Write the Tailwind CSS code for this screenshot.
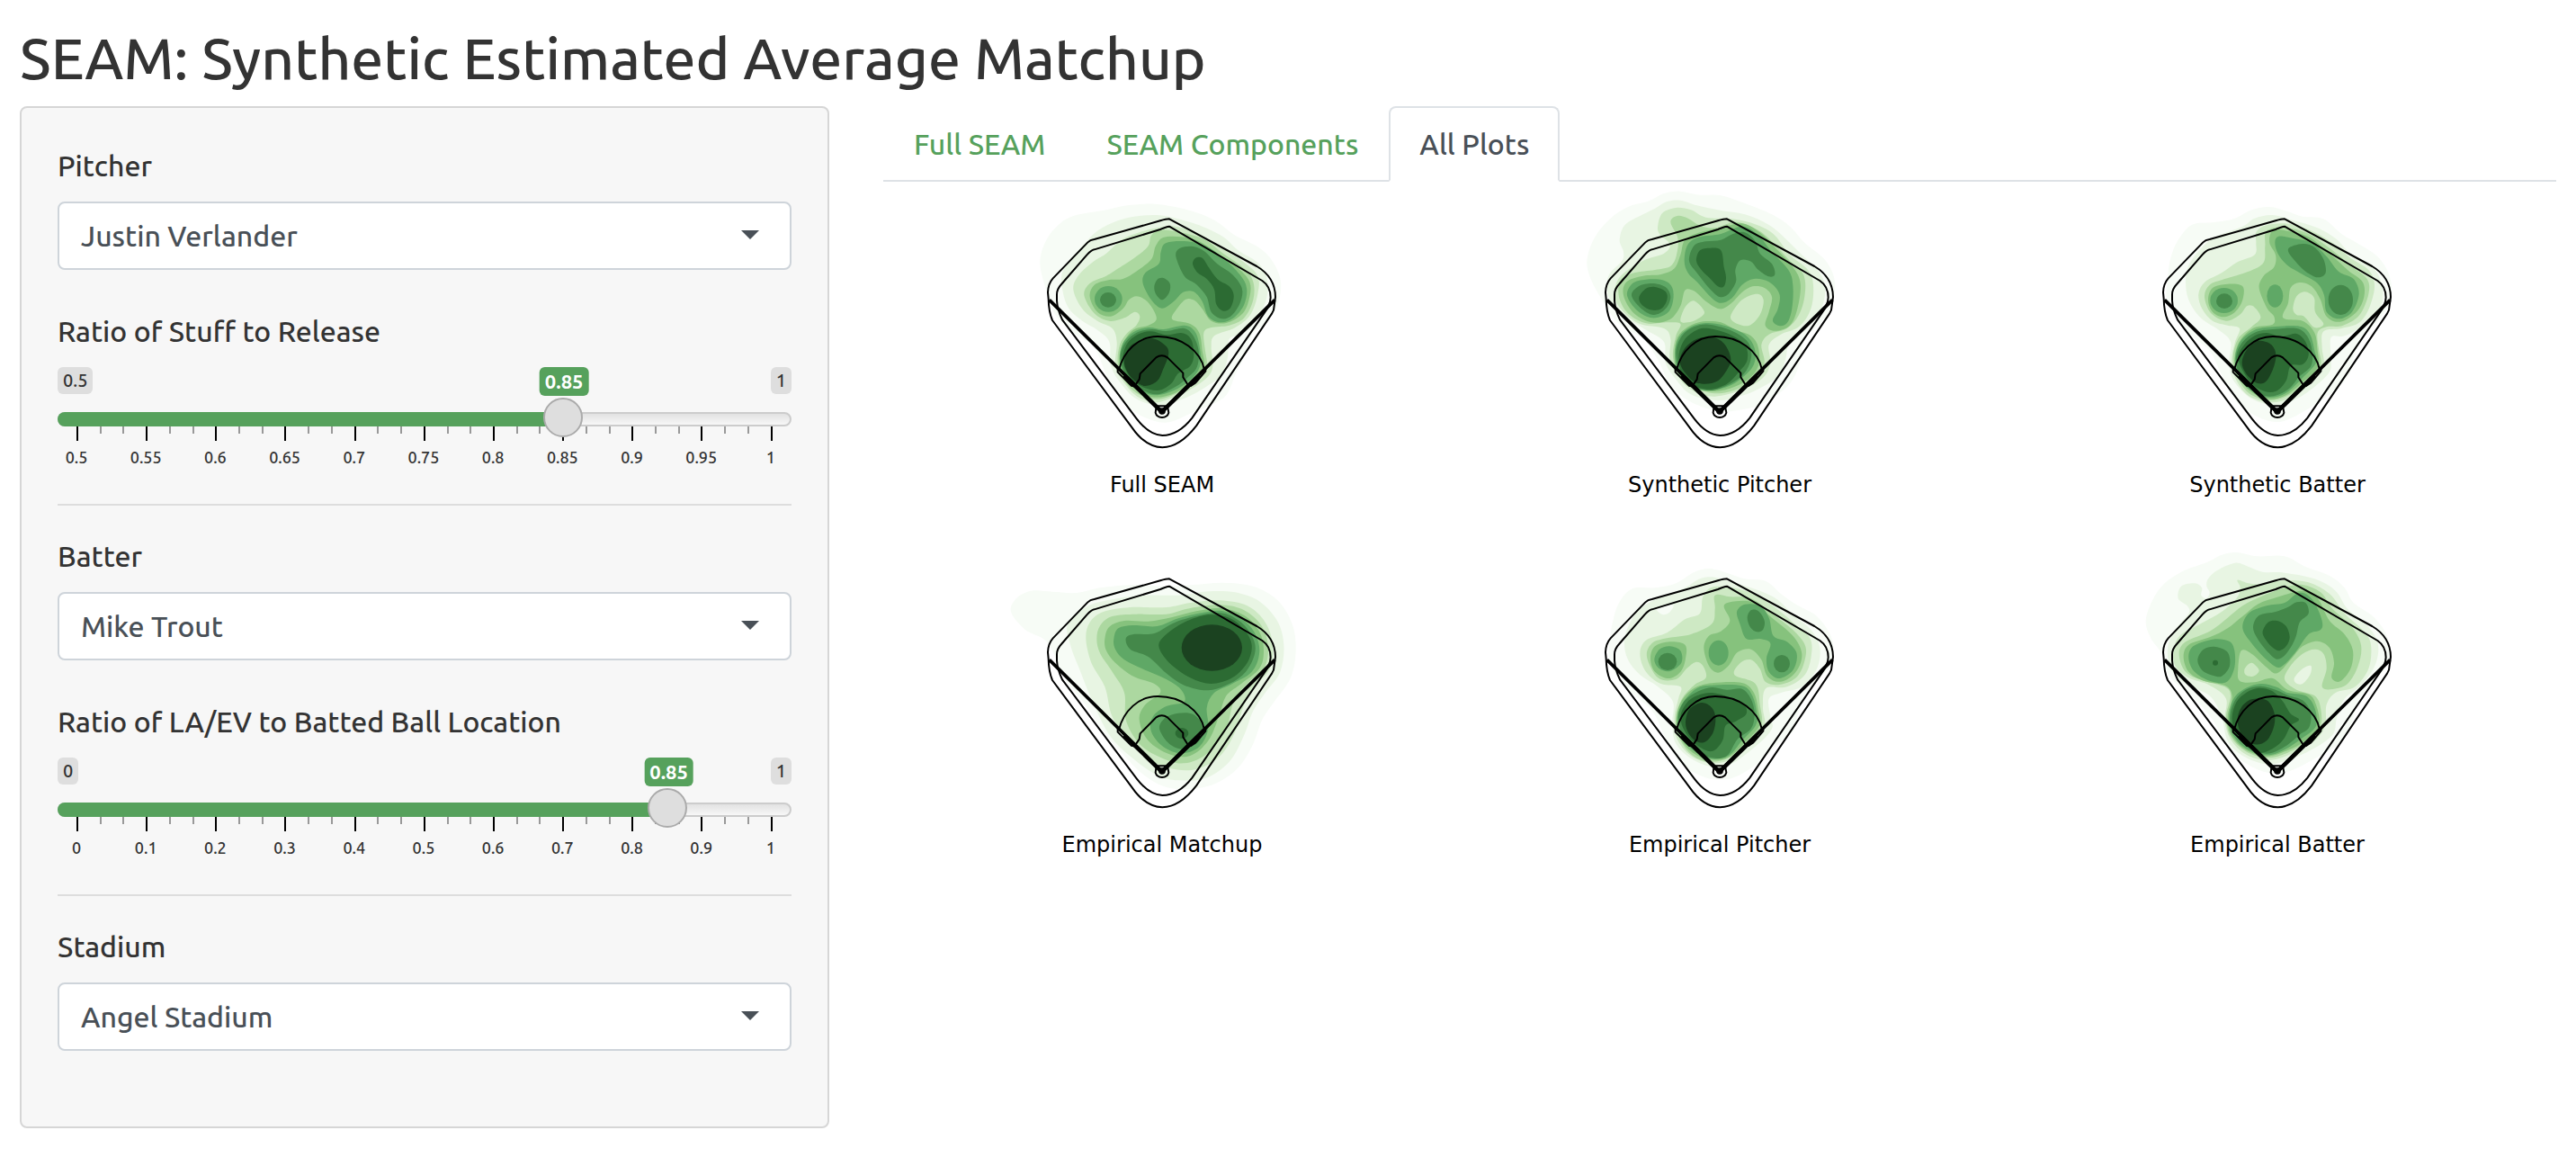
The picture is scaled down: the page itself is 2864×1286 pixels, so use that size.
<!DOCTYPE html>
<html lang="en">
<head>
    <meta charset="UTF-8">
    <meta name="viewport" content="width=device-width, initial-scale=1.0">
    <title>SEAM: Synthetic Estimated Average Matchup</title>
    <script src="https://cdn.jsdelivr.net/npm/@tailwindcss/browser@4"></script>
</head>
<body class="bg-white px-[22px] pt-6 pb-8 font-['Ubuntu','Noto_Sans',sans-serif] text-[32px] leading-[48px] font-medium text-[#333]">
    <h1 class="mb-[14px] text-[64px] leading-[80px] font-medium">SEAM: Synthetic Estimated Average Matchup</h1>
    <div class="grid grid-cols-[15fr_31fr] items-start gap-[60px]">
        <form class="rounded-lg border-2 border-[#d6d6d6] bg-[#f7f7f7] px-10 pt-10 pb-[84px]">
            <label for="pitcher" class="block">Pitcher</label>
            <div class="relative mt-4">
                <select id="pitcher" class="block h-[76px] w-full appearance-none rounded-lg border-2 border-[#ced4da] bg-white px-6 text-[#495057]">
                    <option>Justin Verlander</option>
                </select>
                <svg class="pointer-events-none absolute top-8 right-9 h-[10px] w-5 fill-[#495057]" viewBox="0 0 20 10"><path d="M0 0H20L10 10Z"/></svg>
            </div>
            <label for="stuff" class="mt-11 block">Ratio of Stuff to Release</label>
            <div class="slider mt-4" data-id="stuff" data-min="0.5" data-max="1" data-step="0.05" data-value="0.85"></div>
            <hr class="my-10 mb-8 border-t-2 border-[#dddddd]">

            <label for="batter" class="block">Batter</label>
            <div class="relative mt-4">
                <select id="batter" class="block h-[76px] w-full appearance-none rounded-lg border-2 border-[#ced4da] bg-white px-6 text-[#495057]">
                    <option>Mike Trout</option>
                </select>
                <svg class="pointer-events-none absolute top-8 right-9 h-[10px] w-5 fill-[#495057]" viewBox="0 0 20 10"><path d="M0 0H20L10 10Z"/></svg>
            </div>
            <label for="laev" class="mt-11 block">Ratio of LA/EV to Batted Ball Location</label>
            <div class="slider mt-4" data-id="laev" data-min="0" data-max="1" data-step="0.1" data-value="0.85"></div>
            <hr class="my-10 mb-8 border-t-2 border-[#dddddd]">

            <label for="stadium" class="block">Stadium</label>
            <div class="relative mt-4">
                <select id="stadium" class="block h-[76px] w-full appearance-none rounded-lg border-2 border-[#ced4da] bg-white px-6 text-[#495057]">
                    <option>Angel Stadium</option>
                </select>
                <svg class="pointer-events-none absolute top-8 right-9 h-[10px] w-5 fill-[#495057]" viewBox="0 0 20 10"><path d="M0 0H20L10 10Z"/></svg>
            </div>
        </form>

        <main>
            <nav class="flex border-b-2 border-[#dee2e6] text-[#56a15c]">
                <a href="#full" class="-mb-[2px] border-2 border-transparent px-8 py-4">Full SEAM</a>
                <a href="#components" class="-mb-[2px] border-2 border-transparent px-8 py-4">SEAM Components</a>
                <a href="#all" class="-mb-[2px] rounded-t-lg border-2 border-[#dee2e6] border-b-white bg-white px-8 py-4 text-[#495057]">All Plots</a>
            </nav>
            <div id="plots" class="grid grid-cols-3"></div>
        </main>
    </div>

    <!-- Field outline shared by every plot -->
    <svg class="hidden">
        <symbol id="field" viewBox="0 0 1020 900" overflow="visible">
            <g fill="none" stroke="#000" stroke-width="6" stroke-linejoin="round">
                <path d="M540 100L832 258Q893 294 894 360L888 404L882 416L630 790Q576 860 517 862Q460 860 416 796L150 438Q138 410 137 366L135 345Q136 316 152 298L268 178Q276 170 290 168L510 106Q530 100 540 100Z"/>
                <path d="M540 125L850 306Q878 325 878 362L876 376L866 400L616 764Q570 822 517 822Q472 820 431 766L183 436Q166 400 165 372V352Q165 334 180 318L265 220Q280 204 290 202L510 135Q530 126 540 125Z"/>
                <path d="M372 603C388 540 438 492 500 492C580 491 645 540 657 603M368 598V611L413 656L430 659M661 598V608L628 646L612 657H598"/>
                <path d="M426 655L440 635L443 616L496 562Q515 550 534 562L586 614V628L603 655"/>
                <path d="M140 370L515 742L892 370" stroke-width="11"/>
                <path d="M390 622L515 744L640 622" stroke-width="13"/>
                <path d="M497 724H534L538 746Q534 761 516 762Q498 761 494 746Z"/>
                <circle cx="516" cy="741" r="9" stroke-width="5"/>
            </g>
        </symbol>
    </svg>

    <script>
        // Density bands, lightest to darkest
        var colors = ['#f7fcf6', '#e8f5e3', '#cee9c4', '#acd8a0', '#86c27d', '#5fa866', '#44884a', '#2c6b33', '#1b4220'];

        // Each contour is [band, points], a contour with four numbers is an ellipse (cx cy rx ry)
        var plots = [
            { name: 'Full SEAM', dx: 0, dy: 0, contours: [
                [0, '109,250 125,180 165,125 220,90 330,70 400,55 490,50 560,60 640,82 700,110 760,155 830,190 880,235 912,310 900,390 860,450 820,480 790,560 760,620 735,680 700,710 620,745 540,778 480,770 420,740 370,690 330,620 290,530 220,480 160,420 130,340'],
                [1, '180,300 200,250 250,190 300,140 370,105 440,90 510,88 570,100 650,125 720,160 770,205 840,250 868,310 860,380 820,450 780,485 740,500 735,560 715,620 670,655 620,685 560,710 500,722 430,700 380,650 345,590 340,510 300,470 250,440 200,390'],
                [2, '220,335 240,285 290,240 330,215 380,170 440,145 500,130 560,125 640,150 720,200 790,245 835,290 835,350 810,420 760,462 690,490 680,530 685,590 665,630 600,675 540,700 490,712 430,690 385,640 360,590 365,510 350,465 300,440 250,400'],
                [3, '256,355 275,315 330,290 370,265 430,225 470,190 480,155 510,137 580,145 660,170 720,215 790,265 820,310 820,370 790,430 740,455 680,462 655,480 660,540 665,590 640,635 580,675 500,702 430,680 385,630 368,580 375,520 400,480 430,455 442,425 425,410 390,430 340,440 290,415'],
                [4, '275,360 290,320 340,303 385,300 430,275 480,235 495,190 520,162 580,160 640,175 700,215 770,265 808,310 808,360 785,415 730,447 680,440 650,400 625,372 595,368 565,400 550,435 610,450 640,480 650,540 655,590 620,640 560,680 490,695 430,670 385,620 373,570 385,515 420,470 470,455 497,435 485,400 460,370 430,358 405,370 385,400 345,425 300,410'],
                [5, '375,570 385,515 420,478 470,462 520,468 590,455 625,475 640,520 645,580 620,628 560,670 490,688 430,665 390,620'],
                [5, '337 367 46 43'],
                [5, '512,210 530,180 600,175 660,190 720,230 775,285 798,330 790,385 755,430 710,445 670,425 650,375 620,342 585,345 555,375 515,398 480,370 452,315 460,280 505,250'],
                [6, '377,560 395,510 430,480 480,468 530,474 590,465 620,490 638,540 632,595 600,630 560,660 500,685 440,665 395,620'],
                [6, '336 370 27 25'],
                [6, '490,325 500,302 520,297 542,315 540,345 517,370 495,350'],
                [6, '562,225 575,198 620,192 660,210 700,250 750,285 782,330 778,375 750,420 715,433 680,410 665,360 630,318 590,290'],
                [7, '385,565 400,515 435,485 480,475 530,487 580,480 612,500 622,550 610,590 570,615 545,650 500,672 440,655 400,615'],
                [7, '618,250 628,230 650,230 672,262 700,300 740,325 755,355 745,395 720,407 697,385 690,335 665,300 635,280'],
                [8, '390,575 405,530 440,507 490,500 530,525 537,555 520,600 500,640 460,657 425,640 400,610']
            ] },
            { name: 'Synthetic Pitcher', dx: 0, dy: -30, contours: [
                [0, '73,270 100,190 150,130 210,90 280,70 330,45 385,38 450,50 520,52 600,78 690,115 750,155 800,210 870,270 900,340 890,420 850,480 800,530 780,620 740,690 650,750 560,770 500,770 410,735 350,680 310,600 260,530 180,480 130,410 90,340'],
                [1, '182,200 200,150 260,115 300,95 340,72 385,68 440,85 520,102 600,115 680,150 740,200 790,250 850,310 868,370 850,440 800,500 750,530 735,600 710,655 640,700 570,725 500,735 420,715 370,665 335,610 330,540 270,500 190,450 145,390 145,320 190,270 195,240'],
                [2, '310,150 325,110 370,93 420,100 470,125 560,130 640,150 700,185 750,250 810,300 828,350 820,430 780,490 720,515 680,550 685,610 660,660 590,700 500,722 430,705 380,660 350,600 352,530 330,495 250,480 195,440 165,390 175,335 210,300 270,265 330,245 350,215 315,180'],
                [3, '352,140 375,120 410,128 450,152 500,160 570,140 640,165 690,205 750,270 795,315 800,380 780,450 740,495 680,515 655,550 665,610 640,655 580,695 500,712 430,690 380,650 360,590 370,520 385,480 340,475 270,478 210,445 180,390 185,335 230,310 300,300 355,285 375,235 375,190'],
                [2, '385,470 400,425 430,403 465,440 440,465 410,475'],
                [2, '552,455 590,400 640,380 662,400 650,450 615,485 575,480'],
                [4, '195,385 205,340 260,320 320,315 365,295 385,250 400,200 450,175 520,160 590,145 650,175 700,225 760,290 785,345 775,430 750,485 700,503 668,485 680,440 690,390 665,360 625,355 590,375 550,415 515,430 470,405 430,370 400,368 385,420 350,465 290,475 230,445'],
                [4, '365,580 375,525 410,490 460,472 520,475 570,500 620,520 645,560 645,620 610,665 550,695 480,705 420,690 375,640'],
                [5, '207,385 225,345 270,332 330,335 358,360 360,405 340,445 290,460 240,435'],
                [5, '398,270 410,215 450,190 520,180 590,155 640,180 690,240 745,300 760,350 758,420 745,470 720,487 693,470 710,430 715,380 680,340 630,330 590,350 555,395 515,410 480,385 440,340 410,310'],
                [5, '367,580 380,525 420,490 470,477 530,485 600,515 632,560 630,615 590,660 540,690 470,702 415,685 378,640'],
                [6, '222,385 245,355 290,345 335,357 352,390 335,430 295,450 250,425'],
                [6, '414,270 430,220 470,205 520,200 560,180 600,175 635,205 650,245 690,280 700,315 680,322 645,300 620,272 585,268 568,300 570,340 545,380 515,390 480,360 440,310'],
                [6, '370,575 390,520 430,490 480,482 550,500 605,535 622,580 605,635 560,675 490,702 420,685 385,640'],
                [7, '247,390 270,362 300,357 335,372 340,400 320,430 285,433 255,415'],
                [7, '438,270 450,235 485,227 520,235 530,290 537,325 530,355 510,355 480,325 455,300'],
                [7, '380,580 400,530 440,500 480,495 550,515 600,550 608,600 580,640 540,680 480,698 420,680 385,635'],
                [8, '383,610 400,560 440,530 490,523 530,545 552,590 545,625 510,670 460,680 420,665']
            ] },
            { name: 'Synthetic Batter', dx: 0, dy: 0, contours: [
                [0, '160,230 185,170 230,120 300,112 370,100 430,70 490,60 550,75 600,92 670,100 730,150 790,185 850,225 890,290 895,370 860,430 800,500 770,560 755,620 710,670 640,720 560,765 510,777 450,760 380,710 330,620 290,540 210,470 150,380 150,300'],
                [1, '210,310 220,255 260,200 310,160 400,125 440,98 500,87 570,105 650,130 710,165 760,215 830,255 865,320 860,390 800,455 740,490 695,495 695,570 690,610 640,660 570,705 500,720 430,700 370,640 355,580 360,510 320,470 260,430 220,370'],
                [2, '253,350 275,310 330,280 380,245 440,220 445,180 445,145 475,122 540,115 620,135 700,180 760,230 820,270 840,320 825,390 790,445 730,465 670,475 665,530 670,590 630,645 570,690 500,712 420,690 375,630 363,570 375,510 390,465 350,455 300,440 265,400'],
                [3, '273,360 290,320 340,300 420,275 470,245 475,190 480,140 540,128 620,150 700,205 760,255 815,300 820,350 790,420 735,455 680,460 650,480 655,540 660,590 620,640 560,685 490,705 420,680 380,620 368,560 385,500 430,460 460,430 440,395 415,390 390,420 345,440 295,415'],
                [2, '568,400 580,358 608,343 638,362 642,410 670,450 640,462 605,425 580,420'],
                [4, '285,370 300,330 350,317 400,325 400,370 375,410 335,427 298,408'],
                [4, '455,330 470,290 505,260 510,220 490,180 500,140 550,140 620,160 690,215 750,270 800,310 805,360 780,410 725,443 680,425 660,370 630,325 590,312 560,330 552,380 535,430 600,440 640,480 650,540 650,595 600,645 540,690 480,700 420,670 378,610 375,550 395,500 440,462 500,452 505,425 480,395'],
                [5, '338 372 46 42'],
                [5, '508 357 27 38'],
                [5, '508,180 520,158 570,165 630,180 680,225 720,275 770,300 788,350 765,410 720,433 680,410 672,355 650,315 600,285 550,255 520,220'],
                [5, '375,560 395,505 440,470 500,460 590,458 625,485 640,540 645,580 600,630 545,680 485,695 425,670 385,620'],
                [6, '339 374 27 25'],
                [6, '552,200 600,183 640,195 670,235 677,280 650,295 610,275 575,240'],
                [6, '727 370 41 50'],
                [6, '378,560 400,510 445,477 500,468 580,465 615,490 632,540 628,590 590,625 550,670 490,692 430,668 390,620'],
                [7, '385,565 405,520 440,490 480,480 530,492 580,483 610,510 620,555 600,585 560,590 545,640 510,675 460,670 415,630'],
                [8, '398,580 415,535 450,507 490,515 510,545 505,590 480,640 450,648 415,620']
            ] },
            { name: 'Empirical Matchup', dx: -30, dy: 0, contours: [
                [0, '42,210 60,165 110,140 180,143 260,147 340,130 450,120 560,125 650,120 750,113 850,125 930,170 980,250 992,340 975,430 920,510 880,570 850,650 800,730 730,780 650,800 560,795 480,750 420,690 350,610 290,520 220,430 180,340 150,300 90,270'],
                [1, '232,250 300,190 400,165 490,155 600,155 700,142 790,145 870,175 930,240 952,320 940,410 890,480 850,540 820,620 770,710 690,765 600,772 530,755 450,700 370,620 310,500 270,400 240,320'],
                [2, '292,300 305,245 350,210 440,195 560,195 640,180 740,172 830,190 890,245 915,320 905,400 860,455 820,520 790,610 740,690 660,735 570,732 500,700 440,640 380,560 355,460 310,380'],
                [3, '328,300 340,255 380,225 460,218 560,218 640,198 740,187 820,205 880,260 900,330 885,400 830,450 785,510 760,600 700,680 620,715 540,695 470,650 425,570 420,480 380,410 340,350'],
                [4, '355,300 370,260 420,240 500,242 580,228 660,208 740,198 820,222 870,275 885,340 870,400 810,450 760,490 735,560 700,640 640,690 570,685 500,640 470,570 490,520 540,480 520,450 450,425 390,380 360,340'],
                [5, '385,300 400,265 450,255 530,258 600,232 680,213 750,208 820,240 860,290 870,350 845,410 780,450 720,480 695,530 700,600 670,660 610,682 550,660 510,610 515,560 560,525 620,510 610,470 560,435 480,400 420,370 390,335'],
                [6, '425,300 450,285 520,282 590,245 680,220 750,215 810,245 850,300 855,350 825,410 770,450 700,472 620,455 560,415 500,360 440,335'],
                [6, '537,600 555,565 600,548 650,552 680,590 670,640 620,668 570,650'],
                [7, '535,325 560,285 620,245 700,220 770,230 820,270 845,320 830,380 780,430 710,450 640,430 570,380'],
                [7, '612 615 22 18'],
                [8, '712 330 101 77']
            ] },
            { name: 'Empirical Pitcher', dx: 0, dy: 0, contours: [
                [0, '160,240 180,180 225,133 300,130 370,115 430,78 480,66 540,80 600,100 670,108 720,150 770,185 840,225 890,300 890,380 850,430 800,490 775,560 760,610 710,650 650,710 570,760 510,770 450,755 380,710 330,620 290,540 200,460 150,380 150,300'],
                [1, '198,310 215,250 250,200 310,165 400,130 450,100 500,95 570,115 650,140 710,170 760,220 820,270 850,330 840,400 790,460 720,480 680,500 685,560 690,600 640,655 560,715 500,728 430,705 370,650 358,580 360,510 310,460 250,420 210,370'],
                [0, '305,200 335,188 362,188 348,212 325,219'],
                [2, '250,350 270,305 340,280 400,235 450,215 460,160 490,128 560,130 640,155 700,195 760,245 815,295 822,350 800,420 740,460 670,465 660,530 665,590 620,650 560,700 490,715 420,690 372,630 365,560 378,500 385,460 320,450 270,410'],
                [3, '273,360 290,315 340,298 420,285 490,250 500,200 500,155 550,160 620,165 690,215 760,270 800,320 800,370 775,425 720,452 670,445 650,400 620,370 585,380 565,420 635,450 650,520 655,590 610,645 550,695 480,710 420,685 376,620 370,560 390,500 430,455 470,430 460,390 435,378 405,400 370,435 310,430'],
                [4, '285,365 300,325 350,310 400,320 402,365 385,410 345,432 300,410'],
                [4, '463,330 480,290 520,275 550,240 530,190 570,175 630,180 690,230 760,290 790,350 770,410 720,443 675,425 655,370 620,335 575,345 545,390 510,413 480,390'],
                [4, '372,560 390,505 430,465 490,448 590,447 630,480 645,540 648,590 600,645 545,695 480,703 420,675 380,620'],
                [5, '298,370 315,335 350,325 385,340 388,380 350,408 315,400'],
                [5, '512 347 33 42'],
                [5, '573,210 600,185 650,190 680,230 695,290 740,310 773,350 760,405 715,432 680,410 672,365 685,315 650,300 605,300 585,255'],
                [5, '375,560 395,510 440,465 490,455 590,457 625,490 640,550 635,590 590,640 545,690 485,700 425,670 385,615'],
                [6, '342 376 31 29'],
                [6, '608,230 620,205 645,208 665,240 660,270 640,277 618,262'],
                [6, '723 383 27 29'],
                [6, '378,555 400,505 445,475 490,462 540,470 590,467 620,500 632,550 620,600 575,635 540,690 490,697 430,665 388,610'],
                [7, '385,560 405,515 440,490 490,480 550,495 595,515 605,550 570,575 535,590 525,640 490,675 440,655 400,610'],
                [8, '402,580 415,535 455,513 490,530 502,565 495,610 470,642 440,643 412,615']
            ] },
            { name: 'Empirical Batter', dx: 0, dy: 0, contours: [
                [0, '77,240 100,170 140,115 200,75 280,45 330,20 380,12 450,25 540,25 610,60 690,90 740,130 770,180 840,230 885,300 885,380 840,440 790,500 760,590 720,650 640,700 560,740 490,748 410,715 350,660 300,570 240,500 160,430 130,350 95,300'],
                [1, '150,330 175,270 220,215 215,190 185,165 195,125 240,115 264,130 262,155 280,165 290,145 280,125 285,100 315,72 375,47 420,60 470,78 540,80 640,100 710,140 750,200 810,250 850,310 845,380 800,450 740,500 715,560 700,620 630,670 550,705 480,718 400,690 350,640 330,560 290,490 210,450 160,400'],
                [2, '170,340 190,290 260,250 330,210 380,165 392,130 383,104 420,115 460,118 540,105 620,112 690,150 740,215 800,270 828,320 820,400 775,460 710,480 680,520 675,590 640,640 560,685 480,705 410,685 360,635 340,570 345,500 290,455 220,430 175,390'],
                [1, '573,430 600,400 628,390 625,420 600,450 578,448'],
                [3, '188,350 210,310 290,275 350,230 400,190 460,160 540,130 600,120 660,145 700,200 760,255 795,320 785,390 750,450 700,468 665,460 680,400 670,350 640,335 600,350 560,390 540,435 580,470 640,490 660,530 660,590 620,640 550,680 480,697 410,675 360,625 345,560 360,490 340,460 270,440 210,410'],
                [2, '407,400 430,380 455,405 435,425 410,420'],
                [4, '203,360 220,320 290,295 350,265 400,225 450,185 520,160 600,140 650,165 690,240 740,285 768,340 760,400 725,442 697,430 705,380 690,330 650,308 600,325 560,370 515,415 480,395 430,350 395,340 385,400 390,440 440,445 500,432 550,470 620,485 645,520 655,590 610,640 550,672 480,692 410,670 362,620 350,560 365,490 340,455 270,440 220,410'],
                [5, '220,365 235,325 300,302 355,308 373,340 372,400 345,445 290,440 240,410'],
                [5, '400,265 420,215 480,190 540,180 580,150 610,150 640,180 665,240 660,270 620,285 580,340 540,385 515,395 480,370 430,315'],
                [5, '355,560 370,500 410,465 460,450 510,460 550,480 610,490 640,530 645,590 600,630 540,670 480,688 410,665 365,615'],
                [6, '250,370 270,335 310,327 350,345 357,390 330,425 300,422 265,405'],
                [6, '435,260 455,222 510,210 550,195 580,178 610,180 620,215 590,245 575,300 545,350 515,368 485,345 450,300'],
                [6, '358,560 375,505 410,470 460,458 510,470 550,488 600,505 627,545 622,595 590,620 540,660 480,683 415,660 370,610'],
                [7, '309 380 9 9'],
                [7, '467,275 485,245 515,240 545,258 557,295 545,325 520,340 495,325 475,300'],
                [7, '365,560 380,510 415,478 455,464 500,475 535,510 560,550 588,570 560,590 540,630 510,660 460,680 410,655 375,610'],
                [8, '383,575 395,530 430,502 480,505 505,545 505,590 480,640 440,652 400,625']
            ] }
        ];

        // Closed smooth curve through the points
        function smooth(str) {
            var p = str.split(' ').map(s => s.split(',').map(Number));
            var n = p.length;
            var d = 'M' + p[0];
            for (var i = 0; i < n; i++) {
                var a = p[(i + n - 1) % n], b = p[i], c = p[(i + 1) % n], e = p[(i + 2) % n];
                d += 'C' + [b[0] + (c[0] - a[0]) / 6, b[1] + (c[1] - a[1]) / 6, c[0] - (e[0] - b[0]) / 6, c[1] - (e[1] - b[1]) / 6, c[0], c[1]].map(Math.round).join(' ');
            }
            return d + 'Z';
        }

        function shape(contour) {
            var fill = colors[contour[0]];
            if (contour[1].indexOf(',') === -1) {
                var e = contour[1].split(' ');
                return `<ellipse cx="${e[0]}" cy="${e[1]}" rx="${e[2]}" ry="${e[3]}" fill="${fill}"/>`;
            }
            return `<path d="${smooth(contour[1])}" fill="${fill}"/>`;
        }

        document.getElementById('plots').innerHTML = plots.map(plot => `
            <figure class="flex h-[400px] flex-col items-center pt-2">
                <svg class="h-[300px] w-[340px] shrink-0 overflow-visible" viewBox="6 0 1020 900" role="img" aria-label="${plot.name}">
                    <g transform="translate(${plot.dx} ${plot.dy})">${plot.contours.map(shape).join('')}</g>
                    <use href="#field" width="1020" height="900"/>
                </svg>
                <figcaption class="mt-[11px] font-['DejaVu_Sans',sans-serif] text-[24px] leading-[36px] font-normal text-black">${plot.name}</figcaption>
            </figure>`).join('');

        document.querySelectorAll('.slider').forEach(el => {
            var min = +el.dataset.min, max = +el.dataset.max, step = +el.dataset.step, value = +el.dataset.value;
            var pct = (value - min) / (max - min) * 100;
            var count = Math.round((max - min) / step);
            var ticks = '', labels = '';
            for (var i = 0; i <= count * 3; i++) {
                ticks += i % 3 === 0 ? '<i class="h-4 w-[2px] bg-black"></i>' : '<i class="h-2 w-[2px] bg-[#999]"></i>';
            }
            for (var j = 0; j <= count; j++) {
                labels += `<span class="flex w-0 justify-center">${+(min + j * step).toFixed(2)}</span>`;
            }
            el.innerHTML = `
                <div class="relative flex h-[34px] items-start justify-between text-[20px] leading-[30px]">
                    <span class="rounded-md bg-[#dedede] px-[6px]">${min}</span>
                    <span class="rounded-md bg-[#dedede] px-[6px]">${max}</span>
                    <div class="absolute inset-x-5 top-0">
                        <output for="${el.dataset.id}" class="absolute -translate-x-1/2 rounded-md bg-[#56a15c] px-[6px] text-[22px] leading-[32px] font-bold text-white" style="left:${pct}%">${value}</output>
                    </div>
                </div>
                <div class="relative mt-4 h-4 rounded-lg border-2 border-[#ccc] bg-linear-to-b from-[#e2e2e2] to-[#f7f7f7]">
                    <div class="absolute -inset-[2px]"><div class="h-4 rounded-l-lg bg-[#56a15c]" style="width:${pct}%"></div></div>
                    <input type="range" id="${el.dataset.id}" min="${min}" max="${max}" step="0.01" value="${value}" class="absolute -inset-x-[2px] -top-[18px] z-10 h-11 w-[calc(100%+4px)] appearance-none bg-transparent [&::-webkit-slider-thumb]:h-11 [&::-webkit-slider-thumb]:w-11 [&::-webkit-slider-thumb]:appearance-none [&::-webkit-slider-thumb]:rounded-full [&::-webkit-slider-thumb]:border-2 [&::-webkit-slider-thumb]:border-[#ababab] [&::-webkit-slider-thumb]:bg-[#dedede]">
                </div>
                <div class="mx-[21px] flex justify-between">${ticks}</div>
                <div class="mr-[23px] ml-[21px] mt-[6px] flex justify-between text-[18px] leading-[24px]">${labels}</div>`;
        });
    </script>
</body>
</html>
